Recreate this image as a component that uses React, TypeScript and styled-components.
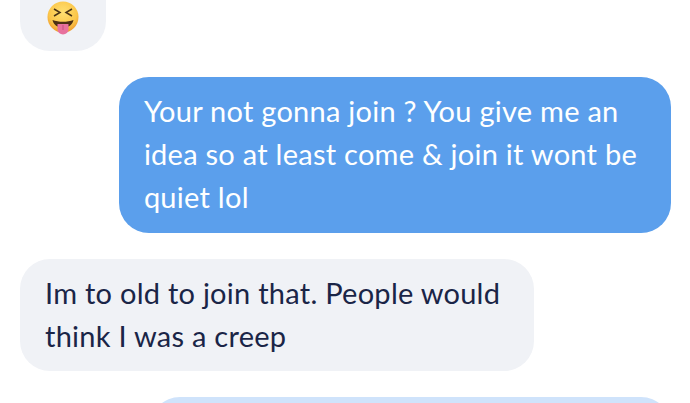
import styled, { createGlobalStyle } from "styled-components";

const Global = createGlobalStyle`
  html, body {
    margin: 0;
    padding: 0;
    width: 690px;
    height: 403px;
    overflow: hidden;
    background: #fff;
  }
`;

const Thread = styled.main`
  width: 690px;
  height: 403px;
  overflow: hidden;
  box-sizing: border-box;
  padding: 0 19px 0 20px;
  display: flex;
  flex-direction: column;
  gap: 26px;
  font-family: "Lato", "Noto Sans", sans-serif;
  font-size: 29px;
  line-height: 43px;
  letter-spacing: 0.26px;
`;

const Bubble = styled.div<{ $mine?: boolean; $pale?: boolean }>`
  flex: none;
  box-sizing: border-box;
  padding: 12px 34px ${(p) => (p.$mine ? "15px" : "14px")} 25px;
  border-radius: 30px;
  align-self: ${(p) => (p.$mine ? "flex-end" : "flex-start")};
  background: ${(p) => (p.$pale ? "#cfe3fb" : p.$mine ? "#5b9fec" : "#f0f2f6")};
  color: ${(p) => (p.$mine ? "#fff" : "#1a2547")};
`;

const EmojiBubble = styled(Bubble)`
  width: 86px;
  height: 51px;
  padding: 0;
  border-radius: 0 0 30px 30px;
  display: flex;
  justify-content: center;
`;

const Emoji = styled.svg`
  width: 32px;
  height: 34px;
  margin-top: 1px;
`;

const PaleBubble = styled(Bubble)`
  width: 521px;
  height: 60px;
`;

const TongueFace = () => (
  <Emoji viewBox="0 0 32 34">
    <defs>
      <radialGradient id="face" cx="50%" cy="35%" r="65%">
        <stop offset="0%" stopColor="#ffe071" />
        <stop offset="70%" stopColor="#fbc64a" />
        <stop offset="100%" stopColor="#ef9a2c" />
      </radialGradient>
    </defs>
    <circle cx="16" cy="16" r="15.500" fill="url(#face)" />
    <path d="M7 8l6 3.500L7 15M25 8l-6 3.500 6 3.500" fill="none" stroke="#4a3416" strokeWidth="1.5" />
    <path d="M5.500 19c6 2.400 15 2.400 21 0-1 5-5 7.500-10.500 7.500S6.500 24 5.500 19z" fill="#4d2f14" />
    <path d="M10.500 23h11v5.500a5.500 5 0 0 1-11 0z" fill="#e8719d" />
    <path d="M16 24v5" stroke="#c94f80" strokeWidth="1" />
  </Emoji>
);

export default function App() {
  return (
    <Thread>
      <Global />
      <EmojiBubble>
        <TongueFace />
      </EmojiBubble>
      <Bubble $mine>
        Your not gonna join ? You give me an
        <br />
        idea so at least come &amp; join it wont be
        <br />
        quiet lol
      </Bubble>
      <Bubble>
        Im to old to join that. People would
        <br />
        think I was a creep
      </Bubble>
      <PaleBubble $mine $pale />
    </Thread>
  );
}
